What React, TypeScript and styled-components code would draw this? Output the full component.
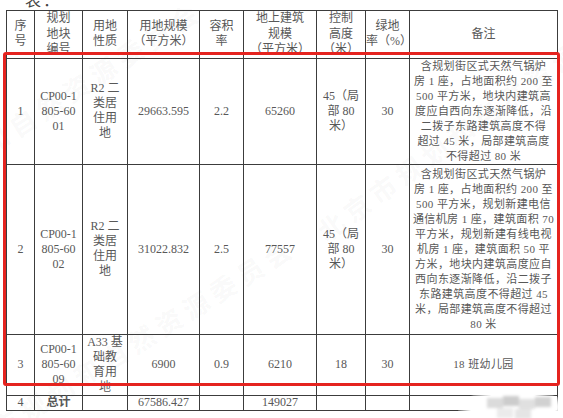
import React from "react";
import styled, { createGlobalStyle } from "styled-components";

const GlobalStyle = createGlobalStyle`
  html, body {
    margin: 0;
    padding: 0;
    background: #ffffff;
  }
  body {
    font-family: "Liberation Serif", "Noto Sans CJK SC", serif;
  }
`;

interface PlotRow {
  no: string;
  code: string[];
  use: string[];
  area: string;
  far: string;
  floor: string;
  height: string[];
  green: string;
  notes: string[];
  rowHeight: number;
}

const headers: string[][] = [
  ["序", "号"],
  ["规划", "地块", "编号"],
  ["用地", "性质"],
  ["用地规模", "（平方米）"],
  ["容积", "率"],
  ["地上建筑", "规模", "（平方米）"],
  ["控制", "高度", "（米）"],
  ["绿地", "率（%）"],
  ["备注"],
];

const colWidths = [28, 48, 45, 72, 44, 73, 49, 44, 148];

const rows: PlotRow[] = [
  {
    no: "1",
    code: ["CP00-1", "805-60", "01"],
    use: ["R2 二", "类居", "住用", "地"],
    area: "29663.595",
    far: "2.2",
    floor: "65260",
    height: ["45（局", "部 80", "米）"],
    green: "30",
    notes: [
      "含规划街区式天然气锅炉",
      "房 1 座，占地面积约 200 至",
      "500 平方米，地块内建筑高",
      "度应自西向东逐渐降低，沿",
      "二拨子东路建筑高度不得",
      "超过 45 米，局部建筑高度",
      "不得超过 80 米",
    ],
    rowHeight: 106,
  },
  {
    no: "2",
    code: ["CP00-1", "805-60", "02"],
    use: ["R2 二", "类居", "住用", "地"],
    area: "31022.832",
    far: "2.5",
    floor: "77557",
    height: ["45（局", "部 80", "米）"],
    green: "30",
    notes: [
      "含规划街区式天然气锅炉",
      "房 1 座，占地面积约 200 至",
      "500 平方米，规划新建电信",
      "通信机房 1 座，建筑面积 70",
      "平方米，规划新建有线电视",
      "机房 1 座，建筑面积 50 平",
      "方米，地块内建筑高度应自",
      "西向东逐渐降低，沿二拨子",
      "东路建筑高度不得超过 45",
      "米，局部建筑高度不得超过",
      "80 米",
    ],
    rowHeight: 170,
  },
  {
    no: "3",
    code: ["CP00-1", "805-60", "09"],
    use: ["A33 基", "础教", "育用", "地"],
    area: "6900",
    far: "0.9",
    floor: "6210",
    height: ["18"],
    green: "30",
    notes: ["18 班幼儿园"],
    rowHeight: 61,
  },
];

const watermarks = [
  { text: "北京市规划和自然资源委员会", x: -150, y: 215, angle: -33 },
  { text: "北京市规划和自然资源委员会", x: 320, y: 215, angle: -36 },
  { text: "北京市规划和自然资源委员会", x: -60, y: 445, angle: -32 },
];

const Lines = ({ items }: { items: string[] }) => (
  <>
    {items.map((line, i) => (
      <Line key={i}>{line}</Line>
    ))}
  </>
);

const App = () => {
  return (
    <>
      <GlobalStyle />
      <Page>
        <Caption>
          <span>表：</span>
        </Caption>
        <Table>
          <colgroup>
            {colWidths.map((w, i) => (
              <col key={i} style={{ width: w }} />
            ))}
          </colgroup>
          <thead>
            <tr style={{ height: 47 }}>
              {headers.map((h, i) => (
                <HeadCell key={i}>
                  <Lines items={h} />
                </HeadCell>
              ))}
            </tr>
          </thead>
          <tbody>
            {rows.map((r) => (
              <tr key={r.no} style={{ height: r.rowHeight }}>
                <Cell>{r.no}</Cell>
                <Cell>
                  <Lines items={r.code} />
                </Cell>
                <Cell>
                  <Lines items={r.use} />
                </Cell>
                <Cell>{r.area}</Cell>
                <Cell>{r.far}</Cell>
                <Cell>{r.floor}</Cell>
                <Cell>
                  <Lines items={r.height} />
                </Cell>
                <Cell>{r.green}</Cell>
                <NoteCell>
                  <Lines items={r.notes} />
                </NoteCell>
              </tr>
            ))}
            <TotalRow>
              <Cell>4</Cell>
              <Cell $bold>总计</Cell>
              <Cell />
              <Cell>67586.427</Cell>
              <Cell />
              <Cell>149027</Cell>
              <Cell />
              <Cell />
              <Cell />
            </TotalRow>
          </tbody>
        </Table>

        {watermarks.map((w, i) => (
          <Watermark key={i} $x={w.x} $y={w.y} $angle={w.angle}>
            {w.text}
          </Watermark>
        ))}

        <Highlight />

        <LogoSmudge>
          <Pixel $x={30} $y={8} $shade={0.14} />
          <Pixel $x={46} $y={6} $shade={0.2} />
          <Pixel $x={62} $y={9} $shade={0.12} />
          <Pixel $x={78} $y={7} $shade={0.18} />
          <Pixel $x={40} $y={18} $shade={0.08} />
          <Pixel $x={58} $y={19} $shade={0.1} />
        </LogoSmudge>
      </Page>
    </>
  );
};

export default App;

const Page = styled.div`
  position: relative;
  width: 563px;
  height: 418px;
  overflow: hidden;
  padding-left: 6px;
  box-sizing: border-box;
  background: #ffffff;
  color: #585858;
`;

const Caption = styled.div`
  height: 9px;
  overflow: hidden;
  display: flex;
  align-items: flex-end;
  padding-left: 19px;
  font-family: "Noto Sans CJK SC", sans-serif;
  font-size: 16px;
  color: #444;

  span {
    line-height: 20px;
    letter-spacing: 2px;
  }
`;

const Table = styled.table`
  border-collapse: collapse;
  table-layout: fixed;
  width: 551px;
  margin-top: 1px;
  font-size: 12px;
  color: #585858;
`;

const Cell = styled.td<{ $bold?: boolean }>`
  border: 1px solid #3c3c3c;
  padding: 0 1px;
  text-align: center;
  vertical-align: middle;
  line-height: 15px;
  font-weight: ${(p) => (p.$bold ? 700 : 400)};
  white-space: nowrap;
  overflow: visible;
`;

const HeadCell = styled.th`
  border: 1px solid #3c3c3c;
  padding: 0;
  text-align: center;
  vertical-align: middle;
  line-height: 15.5px;
  font-weight: 400;
  font-size: 12px;
  white-space: nowrap;
  overflow: visible;
`;

const NoteCell = styled(Cell)`
  font-size: 11px;
  letter-spacing: 0.4px;
  line-height: 15px;
`;

const Line = styled.div`
  display: block;
`;

const TotalRow = styled.tr`
  height: 15px;

  td {
    line-height: 13px;
  }
`;

const Watermark = styled.div<{ $x: number; $y: number; $angle: number }>`
  position: absolute;
  left: ${(p) => p.$x}px;
  top: ${(p) => p.$y}px;
  transform: rotate(${(p) => p.$angle}deg);
  transform-origin: left center;
  font-family: "Noto Sans CJK SC", sans-serif;
  font-size: 26px;
  font-weight: 700;
  letter-spacing: 6px;
  white-space: nowrap;
  color: rgba(110, 110, 110, 0.055);
  pointer-events: none;
`;

const Highlight = styled.div`
  position: absolute;
  left: 3px;
  top: 52px;
  width: 551px;
  height: 328px;
  border: 3px solid #e5231f;
  border-radius: 3px;
  pointer-events: none;
`;

const LogoSmudge = styled.div`
  position: absolute;
  right: -6px;
  bottom: -6px;
  width: 112px;
  height: 34px;
  border-radius: 50%;
  background: radial-gradient(
    ellipse at center,
    rgba(255, 255, 255, 1) 55%,
    rgba(255, 255, 255, 0) 75%
  );
`;

const Pixel = styled.div<{ $x: number; $y: number; $shade: number }>`
  position: absolute;
  left: ${(p) => p.$x}px;
  top: ${(p) => p.$y}px;
  width: 16px;
  height: 10px;
  background: rgba(0, 0, 0, ${(p) => p.$shade});
  filter: blur(1.5px);
`;
